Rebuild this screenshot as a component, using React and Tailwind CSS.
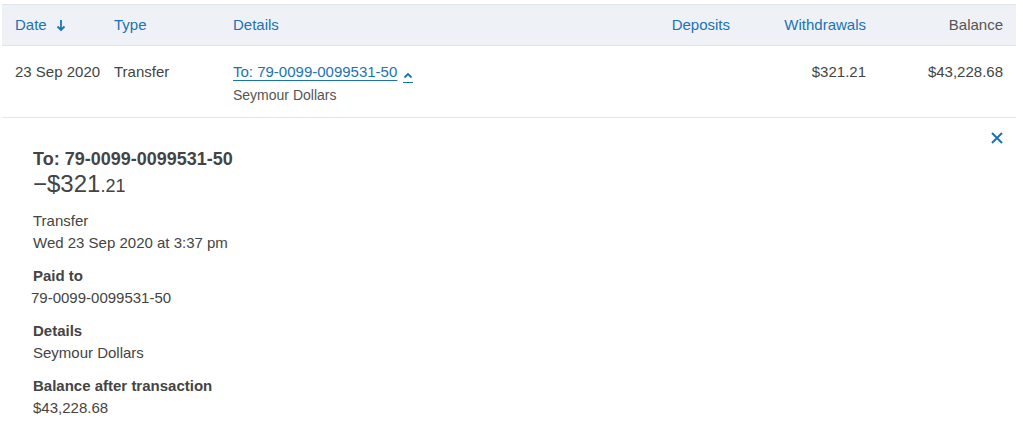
import React from "react";

const blue = "text-[#1a73b5]";

function SortArrow() {
  return (
    <svg width="10" height="13" viewBox="0 0 10 13" className="ml-[9px] inline-block">
      <path d="M5 1v10M1.5 7.5L5 11l3.5-3.5" fill="none" stroke="currentColor" strokeWidth="1.8" />
    </svg>
  );
}

function Caret() {
  return (
    <span className="ml-[6px] inline-flex flex-col items-center border-b border-[#1a73b5] pb-[3px]">
      <svg width="10" height="7" viewBox="0 0 10 7">
        <path d="M1.5 5.5L5 2l3.5 3.5" fill="none" stroke="currentColor" strokeWidth="1.8" />
      </svg>
    </span>
  );
}

function Field({ label, value, valueClass = "" }) {
  return (
    <div className="mt-[11px] leading-[22px]">
      <div className="font-bold">{label}</div>
      <div className={valueClass}>{value}</div>
    </div>
  );
}

export default function App() {
  const cols = "grid grid-cols-[99px_119px_1fr_136px_136px_137px]";
  return (
    <div className="min-h-[443px] bg-white pl-[2px] pr-[7px] pt-[4px] font-['Liberation_Sans',Arial,sans-serif] text-[15px] text-[#444]">
      {/* header */}
      <div className={`${cols} h-[42px] items-center border-y border-[#dfe5ec] bg-[#eef1f6]`}>
        <div className={`flex items-center px-[13px] ${blue}`}>
          Date
          <SortArrow />
        </div>
        <div className={`px-[13px] ${blue}`}>Type</div>
        <div className={`px-[13px] ${blue}`}>Details</div>
        <div className={`px-[13px] text-right ${blue}`}>Deposits</div>
        <div className={`px-[13px] text-right ${blue}`}>Withdrawals</div>
        <div className="px-[13px] text-right text-[#555]">Balance</div>
      </div>

      {/* row */}
      <div className={`${cols} border-b border-[#e3e8ee] pb-[12px] pt-[15px]`}>
        <div className="whitespace-nowrap px-[13px] leading-[22px]">23 Sep 2020</div>
        <div className="px-[13px] leading-[22px]">Transfer</div>
        <div className="px-[13px]">
          <div className={`flex items-end leading-[22px] ${blue}`}>
            <span className="underline underline-offset-[3px]">To: 79-0099-0099531-50</span>
            <Caret />
          </div>
          <div className="mt-[2px] text-[14px] leading-[20px] text-[#555]">Seymour Dollars</div>
        </div>
        <div className="px-[13px]"></div>
        <div className="px-[13px] text-right leading-[22px]">$321.21</div>
        <div className="px-[13px] text-right leading-[22px]">$43,228.68</div>
      </div>

      {/* expanded panel */}
      <div className="relative pb-[25px] pl-[31px] pt-[30px]">
        <button className={`absolute right-[13px] top-[14px] ${blue}`} aria-label="Close">
          <svg width="12" height="12" viewBox="0 0 12 12">
            <path d="M1 1l10 10M11 1L1 11" stroke="currentColor" strokeWidth="2" />
          </svg>
        </button>
        <div className="text-[18px] font-bold leading-[22px]">To: 79-0099-0099531-50</div>
        <div className="leading-[28px]">
          <span className="text-[24px]">−$321</span>
          <span className="text-[18px]">.21</span>
        </div>
        <div className="mt-[9px] leading-[22px]">
          <div>Transfer</div>
          <div>Wed 23 Sep 2020 at 3:37 pm</div>
        </div>
        <Field label="Paid to" value="79-0099-0099531-50" valueClass="-ml-[2px]" />
        <Field label="Details" value="Seymour Dollars" />
        <Field label="Balance after transaction" value="$43,228.68" />
      </div>
    </div>
  );
}
